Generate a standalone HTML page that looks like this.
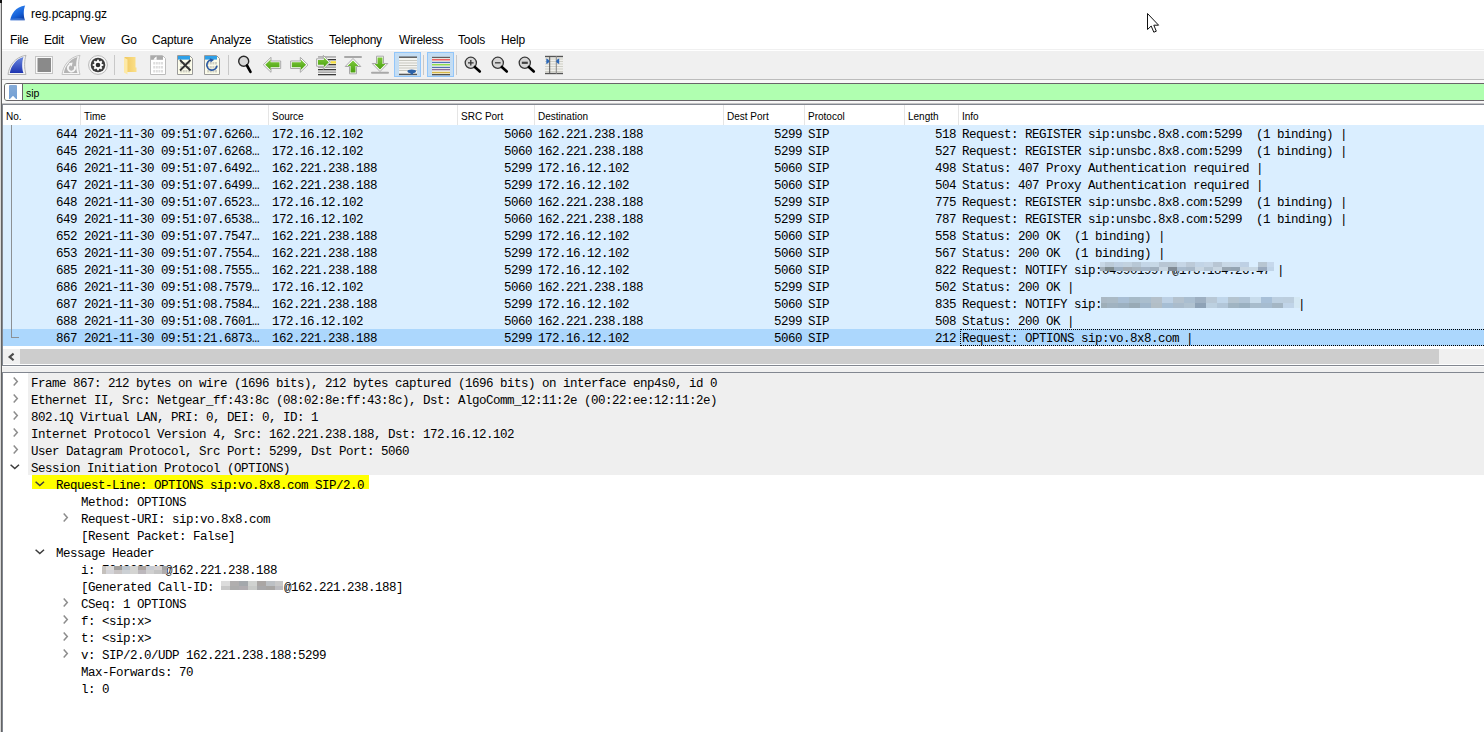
<!DOCTYPE html>
<html><head><meta charset="utf-8">
<style>
*{margin:0;padding:0;box-sizing:border-box}
html,body{width:1484px;height:732px;overflow:hidden;background:#fff}
body{position:relative;font-family:"Liberation Sans",sans-serif;color:#000}
.a{position:absolute}
svg{position:absolute;overflow:visible}
.ui{font-family:"Liberation Sans",sans-serif;white-space:pre}
.mono{font-family:"Liberation Mono",monospace;font-size:12.5px;letter-spacing:-0.5px;white-space:pre;line-height:17px;color:#000}
.menu{top:33px;font-size:12px;letter-spacing:-0.2px;line-height:14px}
.hdr{top:111px;font-size:10px;line-height:12px}
.hsep{top:105px;width:1px;height:20px;background:#e5e5e5}
.row{left:3px;width:1481px;height:17px;background:#daeeff;font-family:"Liberation Mono",monospace;font-size:12.5px;letter-spacing:-0.5px;white-space:pre;line-height:17px}
.row.sel{background:#acd7fd}
.row .c{position:absolute;top:2px;height:17px}
.row .c.r{text-align:right}
.dt{height:17px;padding-top:3px}
.blank{display:inline-block;height:9px;vertical-align:-1px}
.bi{width:64px;background:linear-gradient(90deg,#d8d8d8 0,#c4c4c4 8%,#d4d4d8 15%,#9c9c9c 25%,#b4b8c0 35%,#cfcfd4 48%,#a8a4a4 60%,#c4c4c8 72%,#b8b8b8 85%,#c8c8c8 100%)}
.bc{width:62px;background:linear-gradient(90deg,#dcdcdc 0,#d4d4d4 12%,#a8a8a8 20%,#b0b0b4 35%,#d0d0d0 50%,#a4a4a4 62%,#b8bcc0 78%,#cccccc 100%)}
.tsep{top:55px;width:1px;height:20px;background:#c8c8c8}
</style></head><body>

<!-- window left border -->
<div class="a" style="left:0;top:0;width:1px;height:732px;background:#d8d8d8"></div>
<div class="a" style="left:1px;top:0;width:1px;height:732px;background:#646464"></div>
<div class="a" style="left:0;top:0;width:2px;height:3px;background:#111"></div>

<!-- title -->
<svg style="left:10px;top:5px" width="16" height="16" viewBox="0 0 16 16">
<defs><linearGradient id="sg" x1="0.2" y1="0" x2="0.8" y2="1"><stop offset="0" stop-color="#3a8ef5"/><stop offset="0.6" stop-color="#1560d8"/><stop offset="1" stop-color="#0a38a0"/></linearGradient></defs>
<path d="M0.3 15.3 C1.2 9 5.5 2 15.2 0.6 C13.6 4 13.2 9.5 14.8 15.3 Z" fill="url(#sg)"/>
<path d="M0.3 15.3 L14.8 15.3 L14.6 13.8 C10 13 5 13.2 0.9 13.8 Z" fill="#5a8ee0" opacity="0.6"/>
</svg>
<div class="a ui" style="left:31px;top:7px;font-size:12px;line-height:14px">reg.pcapng.gz</div>

<!-- cursor -->
<svg style="left:1147px;top:13px" width="13" height="20" viewBox="0 0 13 20">
<path d="M0.5 0.5 L0.5 16.5 L4.2 13 L6.8 19.2 L9.3 18.2 L6.8 12.2 L11.6 12.2 Z" fill="#fff" stroke="#111" stroke-width="1" stroke-linejoin="miter"/>
</svg>

<!-- menu -->
<div class="a ui menu" style="left:10px">File</div>
<div class="a ui menu" style="left:44px">Edit</div>
<div class="a ui menu" style="left:80px">View</div>
<div class="a ui menu" style="left:121px">Go</div>
<div class="a ui menu" style="left:152px">Capture</div>
<div class="a ui menu" style="left:210px">Analyze</div>
<div class="a ui menu" style="left:267px">Statistics</div>
<div class="a ui menu" style="left:329px">Telephony</div>
<div class="a ui menu" style="left:399px">Wireless</div>
<div class="a ui menu" style="left:458px">Tools</div>
<div class="a ui menu" style="left:501px">Help</div>

<!-- toolbar -->
<div class="a" style="left:2px;top:49px;width:1482px;height:1px;background:#f0f0f0"></div>
<div class="a" style="left:2px;top:51px;width:1482px;height:28px;background:#f0f0f0"></div>
<div class="a" style="left:2px;top:79px;width:1482px;height:1px;background:#bcbcbc"></div>
<svg style="left:0;top:0" width="600" height="90" viewBox="0 0 600 90">
<defs>
<linearGradient id="gb" x1="0" y1="0" x2="0" y2="1"><stop offset="0" stop-color="#6a88e0"/><stop offset="1" stop-color="#1e34b0"/></linearGradient>
<linearGradient id="gg" x1="0" y1="0" x2="0" y2="1"><stop offset="0" stop-color="#7cc83a"/><stop offset="1" stop-color="#4aa010"/></linearGradient>
<linearGradient id="gf" x1="0" y1="0" x2="1" y2="0"><stop offset="0" stop-color="#f0c860"/><stop offset="1" stop-color="#fbe08a"/></linearGradient>
</defs>
<!-- 1 start capture shark -->
<path d="M8 74.5 C9 66 15 57 26 55.3 C24.3 60 24 68 26 74.5 Z" fill="#f4f4f4" stroke="#b4b4b4" stroke-width="1"/>
<path d="M9.8 73 C11 66 16 59 23.5 57 C22 61 21.6 68 23.4 73 Z" fill="url(#gb)"/>
<!-- 2 stop -->
<rect x="35.5" y="56.5" width="17" height="17" fill="#fafafa" stroke="#c4c4c4" stroke-width="1"/>
<rect x="37.5" y="58" width="13.5" height="14" fill="#8a8a8a"/>
<!-- 3 restart shark -->
<path d="M62 74.5 C63 66 69 57 80 55.3 C78.3 60 78 68 80 74.5 Z" fill="#f6f6f6" stroke="#c4c4c4" stroke-width="1"/>
<path d="M63.8 73 C65 66 70 59 77.5 57 C76 61 75.6 68 77.4 73 Z" fill="#b4b4b4"/>
<path d="M70.2 64.6 A3.6 3.6 0 1 0 74.6 66.2" fill="none" stroke="#f6f6f6" stroke-width="1.9"/>
<path d="M68.6 63.2 L72.6 62.4 L71.6 66.6 Z" fill="#f6f6f6"/>
<!-- 4 options gear -->
<circle cx="98" cy="65" r="9.4" fill="#f8f8f8" stroke="#b8b8b8" stroke-width="1"/>
<circle cx="98" cy="65" r="7.3" fill="#3c3c3c"/>
<g fill="#fff" transform="translate(98 65)">
<circle r="3.9"/>
<rect x="-0.9" y="-5.3" width="1.8" height="10.6"/>
<rect x="-0.9" y="-5.3" width="1.8" height="10.6" transform="rotate(45)"/>
<rect x="-0.9" y="-5.3" width="1.8" height="10.6" transform="rotate(90)"/>
<rect x="-0.9" y="-5.3" width="1.8" height="10.6" transform="rotate(135)"/>
</g>
<circle cx="98" cy="65" r="2.3" fill="#2e2e2e"/>
<!-- sep -->
<rect x="114" y="55" width="1" height="20" fill="#c8c8c8"/>
<!-- 5 open folder -->
<path d="M124.5 57 L135.5 57 L135.5 67.5 L136.5 67.5 L136.5 72 L124.5 72 Z" fill="url(#gf)"/>
<path d="M124 57.5 L127.5 59.5 L127.5 74.5 L124 72.5 Z" fill="#fde9a6"/>
<!-- 6 save (gray doc) -->
<path d="M150.5 55.5 L162.5 55.5 L165.5 58.5 L165.5 74.5 L150.5 74.5 Z" fill="#fff" stroke="#bcbcbc" stroke-width="1"/>
<rect x="151" y="56" width="12" height="3.8" fill="#ababab"/><path d="M153.5 59.8 C154.5 58 155.5 57 156.8 56.6 C156.4 57.6 156.4 58.8 156.8 59.8 Z" fill="#fff"/>
<g fill="#dedede"><rect x="153.2" y="62" width="2" height="2.5"/><rect x="155.8" y="62" width="2" height="2.5"/><rect x="158.4" y="62" width="2" height="2.5"/><rect x="161.0" y="62" width="2" height="2.5"/><rect x="153.2" y="66" width="2" height="2.5"/><rect x="155.8" y="66" width="2" height="2.5"/><rect x="158.4" y="66" width="2" height="2.5"/><rect x="161.0" y="66" width="2" height="2.5"/><rect x="153.2" y="70" width="2" height="2.5"/><rect x="155.8" y="70" width="2" height="2.5"/><rect x="158.4" y="70" width="2" height="2.5"/><rect x="161.0" y="70" width="2" height="2.5"/></g>
<!-- 7 close doc -->
<path d="M177.5 55.5 L189.5 55.5 L192.5 58.5 L192.5 74.5 L177.5 74.5 Z" fill="#fcfcea" stroke="#9a9a9a" stroke-width="1"/>
<rect x="178" y="56" width="12" height="3.6" fill="#2ea0e8"/>
<g fill="#cfcfc4"><rect x="180.2" y="62" width="2" height="2.5"/><rect x="182.8" y="62" width="2" height="2.5"/><rect x="185.4" y="62" width="2" height="2.5"/><rect x="188.0" y="62" width="2" height="2.5"/><rect x="180.2" y="66" width="2" height="2.5"/><rect x="182.8" y="66" width="2" height="2.5"/><rect x="185.4" y="66" width="2" height="2.5"/><rect x="188.0" y="66" width="2" height="2.5"/><rect x="180.2" y="70" width="2" height="2.5"/><rect x="182.8" y="70" width="2" height="2.5"/><rect x="185.4" y="70" width="2" height="2.5"/><rect x="188.0" y="70" width="2" height="2.5"/></g>
<path d="M180 60 L190.5 70.5 M190.5 60 L180 70.5" stroke="#303030" stroke-width="1.8"/>
<!-- 8 reload doc -->
<path d="M204.5 55.5 L216.5 55.5 L219.5 58.5 L219.5 74.5 L204.5 74.5 Z" fill="#fcfcea" stroke="#9a9a9a" stroke-width="1"/>
<rect x="205" y="56" width="12" height="3.6" fill="#2ea0e8"/>
<g fill="#cfcfc4"><rect x="207.2" y="62" width="2" height="2.5"/><rect x="209.8" y="62" width="2" height="2.5"/><rect x="212.4" y="62" width="2" height="2.5"/><rect x="215.0" y="62" width="2" height="2.5"/><rect x="207.2" y="66" width="2" height="2.5"/><rect x="209.8" y="66" width="2" height="2.5"/><rect x="212.4" y="66" width="2" height="2.5"/><rect x="215.0" y="66" width="2" height="2.5"/><rect x="207.2" y="70" width="2" height="2.5"/><rect x="209.8" y="70" width="2" height="2.5"/><rect x="212.4" y="70" width="2" height="2.5"/><rect x="215.0" y="70" width="2" height="2.5"/></g>
<path d="M211.2 59.9 A5.1 5.1 0 1 0 217 65.6" fill="none" stroke="#2a58a2" stroke-width="1.7"/>
<path d="M209.8 58.2 L214.2 59.8 L210.6 62.4 Z" fill="#2a58a2"/>
<!-- sep -->
<rect x="228" y="55" width="1" height="20" fill="#c8c8c8"/>
<!-- 9 find -->
<circle cx="243.7" cy="61.3" r="5" fill="#d8d8d8" stroke="#2a2a2a" stroke-width="1.4"/>
<path d="M247 65.5 L250.5 71.8" stroke="#000" stroke-width="2.6" stroke-linecap="round"/>
<!-- 10 back -->
<path d="M263.3 64.8 L271 57.3 L271 61 L280.7 61 L280.7 68.5 L271 68.5 L271 72.3 Z" fill="#fff" stroke="#a8a8a8" stroke-width="1" stroke-linejoin="round"/>
<path d="M265.2 64.8 L270.6 59.5 L270.6 62.3 L279.5 62.3 L279.5 67.2 L270.6 67.2 L270.6 70 Z" fill="url(#gg)"/>
<!-- 11 forward -->
<path d="M308 64.8 L300.3 57.3 L300.3 61 L290.6 61 L290.6 68.5 L300.3 68.5 L300.3 72.3 Z" fill="#fff" stroke="#a8a8a8" stroke-width="1" stroke-linejoin="round"/>
<path d="M306.1 64.8 L300.7 59.5 L300.7 62.3 L291.8 62.3 L291.8 67.2 L300.7 67.2 L300.7 70 Z" fill="url(#gg)"/>
<!-- 12 go to packet -->
<g>
<rect x="318" y="56.3" width="18" height="1.3" fill="#9a9a9a"/>
<rect x="318" y="59" width="18" height="1.3" fill="#3a3a3a"/>
<rect x="330.5" y="61.2" width="5.5" height="2.3" fill="#f8e040"/>
<rect x="318" y="64" width="18" height="1.3" fill="#3a3a3a"/>
<rect x="318" y="66.5" width="18" height="1.3" fill="#9a9a9a"/>
<rect x="318" y="69" width="18" height="1.3" fill="#3a3a3a"/>
<rect x="318" y="71.5" width="18" height="1.3" fill="#9a9a9a"/>
<rect x="318" y="74" width="18" height="1.3" fill="#3a3a3a"/>
<path d="M316.6 58.8 L323.3 58.8 L323.3 55.3 L330.4 62.3 L323.3 69.3 L323.3 66.2 L316.6 66.2 Z" fill="#fff" stroke="#a0a0a0" stroke-width="0.9" stroke-linejoin="round"/>
<path d="M317.9 60 L323.8 60 L323.8 57.4 L328.9 62.3 L323.8 67.3 L323.8 64.7 L317.9 64.7 Z" fill="url(#gg)"/>
</g>
<!-- 13 first packet -->
<rect x="344" y="56" width="18" height="2" rx="1" fill="#a8a8a8"/>
<path d="M353 58.5 L360.8 66.5 L356.5 66.5 L356.5 73.8 L349.5 73.8 L349.5 66.5 L345.2 66.5 Z" fill="#fff" stroke="#a8a8a8" stroke-width="1" stroke-linejoin="round"/>
<path d="M353 60.5 L358.5 66 L355.5 66 L355.5 72.5 L350.5 72.5 L350.5 66 L347.5 66 Z" fill="url(#gg)"/>
<!-- 14 last packet -->
<rect x="371" y="71.8" width="18" height="2" rx="1" fill="#a8a8a8"/>
<path d="M380 71.5 L387.8 63.5 L383.5 63.5 L383.5 56.2 L376.5 56.2 L376.5 63.5 L372.2 63.5 Z" fill="#fff" stroke="#a8a8a8" stroke-width="1" stroke-linejoin="round"/>
<path d="M380 69.5 L385.5 64 L382.5 64 L382.5 57.5 L377.5 57.5 L377.5 64 L374.5 64 Z" fill="url(#gg)"/>
<!-- 15 auto scroll (checked) -->
<rect x="394.5" y="52.5" width="26" height="24" fill="#c4ddf3" stroke="#92c6fa" stroke-width="1"/>
<rect x="399" y="57" width="18" height="18" fill="#f4f4f0"/>
<g fill="#c8c8c0"><rect x="399" y="60" width="18" height="1"/><rect x="399" y="62.5" width="18" height="1"/><rect x="399" y="65" width="18" height="1"/><rect x="399" y="67.5" width="18" height="1"/><rect x="399" y="70" width="18" height="1"/></g>
<rect x="399" y="56.5" width="18" height="1.4" fill="#555"/>
<rect x="399" y="73.7" width="18" height="1.4" fill="#555"/>
<ellipse cx="411.7" cy="71.3" rx="4.3" ry="1.9" fill="#2c62a8"/>
<rect x="410.5" y="72" width="2.6" height="2.5" fill="#2c62a8"/>
<!-- sep -->
<rect x="423" y="55" width="1" height="20" fill="#c8c8c8"/>
<!-- 16 colorize (checked) -->
<rect x="427.5" y="52.5" width="26" height="24" fill="#c4ddf3" stroke="#92c6fa" stroke-width="1"/>
<rect x="432" y="56.8" width="18" height="18" fill="#f4f4f0"/>
<rect x="432" y="56.8" width="18" height="1.3" fill="#606060"/>
<rect x="432" y="59" width="18" height="1.5" fill="#f06060"/>
<rect x="432" y="61.8" width="18" height="1.3" fill="#5070b8"/>
<rect x="432" y="64" width="18" height="1.5" fill="#90dc50"/>
<rect x="432" y="66.8" width="18" height="1.3" fill="#5070b0"/>
<rect x="432" y="69" width="18" height="1.3" fill="#906c98"/>
<rect x="432" y="71.8" width="18" height="1.5" fill="#d8b848"/>
<rect x="432" y="74" width="18" height="1.3" fill="#505050"/>
<!-- sep -->
<rect x="456" y="55" width="1" height="20" fill="#c8c8c8"/>
<!-- 17 zoom in -->
<circle cx="470.8" cy="62.8" r="5.6" fill="#d6d6d6" stroke="#383838" stroke-width="1.3"/>
<path d="M474.8 67 L479.8 71.5" stroke="#000" stroke-width="2.6" stroke-linecap="round"/>
<path d="M468 62.8 L473.6 62.8 M470.8 60 L470.8 65.6" stroke="#333" stroke-width="1.3"/>
<!-- 18 zoom out -->
<circle cx="497.8" cy="62.8" r="5.6" fill="#d6d6d6" stroke="#383838" stroke-width="1.3"/>
<path d="M501.8 67 L506.8 71.5" stroke="#000" stroke-width="2.6" stroke-linecap="round"/>
<path d="M495 62.8 L500.6 62.8" stroke="#444" stroke-width="1.4"/>
<!-- 19 normal size -->
<circle cx="524.8" cy="62.8" r="5.6" fill="#d6d6d6" stroke="#383838" stroke-width="1.3"/>
<path d="M528.8 67 L533.8 71.5" stroke="#000" stroke-width="2.6" stroke-linecap="round"/>
<path d="M521.8 62.8 L527.8 62.8" stroke="#404040" stroke-width="2.2"/>
<!-- 20 resize columns -->
<rect x="545" y="56" width="18" height="18" fill="#f0f0ec"/>
<g fill="#d0d0c8"><rect x="545" y="58.5" width="18" height="1"/><rect x="545" y="61" width="18" height="1"/><rect x="545" y="63.5" width="18" height="1"/><rect x="545" y="66" width="18" height="1"/><rect x="545" y="68.5" width="18" height="1"/><rect x="545" y="71" width="18" height="1"/></g>
<rect x="545" y="55.8" width="18" height="1.4" fill="#555"/>
<rect x="545" y="72.8" width="18" height="1.4" fill="#555"/>
<rect x="549.2" y="56" width="1" height="18" fill="#555"/>
<rect x="555.8" y="56" width="1" height="18" fill="#888"/>
<path d="M546.3 58.4 C548 59 549.3 60 549.3 61.2 C549.3 62.4 548 63.4 546.3 64 Z" fill="#2c68b8"/>
<path d="M559.2 58.4 C557.5 59 556.2 60 556.2 61.2 C556.2 62.4 557.5 63.4 559.2 64 Z" fill="#2c68b8"/>
</svg>


<!-- filter bar -->
<div class="a" style="left:2px;top:80px;width:1482px;height:23px;background:#f8f8f8"></div>
<div class="a" style="left:2px;top:103px;width:1482px;height:1px;background:#c4c4c4"></div>
<div class="a" style="left:4px;top:83px;width:1500px;height:18px;border:1px solid #686468;border-radius:3px;background:#b0ffb0"></div>
<div class="a" style="left:5px;top:84px;width:17px;height:16px;background:#fff;border-radius:2px 0 0 2px"></div>
<div class="a" style="left:22px;top:84px;width:1px;height:16px;background:#686468"></div>
<div class="a" style="left:9px;top:85px;width:8px;height:14px;background:linear-gradient(180deg,#84aad8,#74a0d4);border-radius:1px 1px 0 0;clip-path:polygon(0 0,100% 0,100% 100%,88% 100%,50% 76%,12% 100%,0 100%)"></div>
<div class="a ui" style="left:26px;top:87px;font-size:10.5px;line-height:13px;letter-spacing:-0.1px">sip</div>

<!-- packet list frame -->
<div class="a" style="left:2px;top:104px;width:1482px;height:1px;background:#828790"></div>
<div class="a" style="left:2px;top:104px;width:1px;height:262px;background:#828790"></div>
<div class="a ui hdr" style="left:6px">No.</div>
<div class="a hsep" style="left:80px"></div>
<div class="a ui hdr" style="left:84px">Time</div>
<div class="a hsep" style="left:268px"></div>
<div class="a ui hdr" style="left:272px">Source</div>
<div class="a hsep" style="left:457px"></div>
<div class="a ui hdr" style="left:461px">SRC Port</div>
<div class="a hsep" style="left:534px"></div>
<div class="a ui hdr" style="left:538px">Destination</div>
<div class="a hsep" style="left:723px"></div>
<div class="a ui hdr" style="left:727px">Dest Port</div>
<div class="a hsep" style="left:804px"></div>
<div class="a ui hdr" style="left:808px">Protocol</div>
<div class="a hsep" style="left:904px"></div>
<div class="a ui hdr" style="left:908px">Length</div>
<div class="a hsep" style="left:958px"></div>
<div class="a ui hdr" style="left:962px">Info</div>

<div class="a row" style="top:125px"><div class="c r" style="right:1407px">644</div><div class="c" style="left:81px">2021-11-30 09:51:07.6260…</div><div class="c" style="left:269px">172.16.12.102</div><div class="c r" style="right:952px">5060</div><div class="c" style="left:535px">162.221.238.188</div><div class="c r" style="right:682px">5299</div><div class="c" style="left:805px">SIP</div><div class="c r" style="right:528px">518</div><div class="c" style="left:959px">Request: REGISTER sip:unsbc.8x8.com:5299  (1 binding) |</div></div>
<div class="a row" style="top:142px"><div class="c r" style="right:1407px">645</div><div class="c" style="left:81px">2021-11-30 09:51:07.6268…</div><div class="c" style="left:269px">172.16.12.102</div><div class="c r" style="right:952px">5060</div><div class="c" style="left:535px">162.221.238.188</div><div class="c r" style="right:682px">5299</div><div class="c" style="left:805px">SIP</div><div class="c r" style="right:528px">527</div><div class="c" style="left:959px">Request: REGISTER sip:unsbc.8x8.com:5299  (1 binding) |</div></div>
<div class="a row" style="top:159px"><div class="c r" style="right:1407px">646</div><div class="c" style="left:81px">2021-11-30 09:51:07.6492…</div><div class="c" style="left:269px">162.221.238.188</div><div class="c r" style="right:952px">5299</div><div class="c" style="left:535px">172.16.12.102</div><div class="c r" style="right:682px">5060</div><div class="c" style="left:805px">SIP</div><div class="c r" style="right:528px">498</div><div class="c" style="left:959px">Status: 407 Proxy Authentication required |</div></div>
<div class="a row" style="top:176px"><div class="c r" style="right:1407px">647</div><div class="c" style="left:81px">2021-11-30 09:51:07.6499…</div><div class="c" style="left:269px">162.221.238.188</div><div class="c r" style="right:952px">5299</div><div class="c" style="left:535px">172.16.12.102</div><div class="c r" style="right:682px">5060</div><div class="c" style="left:805px">SIP</div><div class="c r" style="right:528px">504</div><div class="c" style="left:959px">Status: 407 Proxy Authentication required |</div></div>
<div class="a row" style="top:193px"><div class="c r" style="right:1407px">648</div><div class="c" style="left:81px">2021-11-30 09:51:07.6523…</div><div class="c" style="left:269px">172.16.12.102</div><div class="c r" style="right:952px">5060</div><div class="c" style="left:535px">162.221.238.188</div><div class="c r" style="right:682px">5299</div><div class="c" style="left:805px">SIP</div><div class="c r" style="right:528px">775</div><div class="c" style="left:959px">Request: REGISTER sip:unsbc.8x8.com:5299  (1 binding) |</div></div>
<div class="a row" style="top:210px"><div class="c r" style="right:1407px">649</div><div class="c" style="left:81px">2021-11-30 09:51:07.6538…</div><div class="c" style="left:269px">172.16.12.102</div><div class="c r" style="right:952px">5060</div><div class="c" style="left:535px">162.221.238.188</div><div class="c r" style="right:682px">5299</div><div class="c" style="left:805px">SIP</div><div class="c r" style="right:528px">787</div><div class="c" style="left:959px">Request: REGISTER sip:unsbc.8x8.com:5299  (1 binding) |</div></div>
<div class="a row" style="top:227px"><div class="c r" style="right:1407px">652</div><div class="c" style="left:81px">2021-11-30 09:51:07.7547…</div><div class="c" style="left:269px">162.221.238.188</div><div class="c r" style="right:952px">5299</div><div class="c" style="left:535px">172.16.12.102</div><div class="c r" style="right:682px">5060</div><div class="c" style="left:805px">SIP</div><div class="c r" style="right:528px">558</div><div class="c" style="left:959px">Status: 200 OK  (1 binding) |</div></div>
<div class="a row" style="top:244px"><div class="c r" style="right:1407px">653</div><div class="c" style="left:81px">2021-11-30 09:51:07.7554…</div><div class="c" style="left:269px">162.221.238.188</div><div class="c r" style="right:952px">5299</div><div class="c" style="left:535px">172.16.12.102</div><div class="c r" style="right:682px">5060</div><div class="c" style="left:805px">SIP</div><div class="c r" style="right:528px">567</div><div class="c" style="left:959px">Status: 200 OK  (1 binding) |</div></div>
<div class="a row" style="top:261px"><div class="c r" style="right:1407px">685</div><div class="c" style="left:81px">2021-11-30 09:51:08.7555…</div><div class="c" style="left:269px">162.221.238.188</div><div class="c r" style="right:952px">5299</div><div class="c" style="left:535px">172.16.12.102</div><div class="c r" style="right:682px">5060</div><div class="c" style="left:805px">SIP</div><div class="c r" style="right:528px">822</div><div class="c" style="left:959px">Request: NOTIFY sip:0499019977@173.184.26.47 |</div></div>
<div class="a row" style="top:278px"><div class="c r" style="right:1407px">686</div><div class="c" style="left:81px">2021-11-30 09:51:08.7579…</div><div class="c" style="left:269px">172.16.12.102</div><div class="c r" style="right:952px">5060</div><div class="c" style="left:535px">162.221.238.188</div><div class="c r" style="right:682px">5299</div><div class="c" style="left:805px">SIP</div><div class="c r" style="right:528px">502</div><div class="c" style="left:959px">Status: 200 OK |</div></div>
<div class="a row" style="top:295px"><div class="c r" style="right:1407px">687</div><div class="c" style="left:81px">2021-11-30 09:51:08.7584…</div><div class="c" style="left:269px">162.221.238.188</div><div class="c r" style="right:952px">5299</div><div class="c" style="left:535px">172.16.12.102</div><div class="c r" style="right:682px">5060</div><div class="c" style="left:805px">SIP</div><div class="c r" style="right:528px">835</div><div class="c" style="left:959px">Request: NOTIFY sip:                            |</div></div>
<div class="a row" style="top:312px"><div class="c r" style="right:1407px">688</div><div class="c" style="left:81px">2021-11-30 09:51:08.7601…</div><div class="c" style="left:269px">172.16.12.102</div><div class="c r" style="right:952px">5060</div><div class="c" style="left:535px">162.221.238.188</div><div class="c r" style="right:682px">5299</div><div class="c" style="left:805px">SIP</div><div class="c r" style="right:528px">508</div><div class="c" style="left:959px">Status: 200 OK |</div></div>
<div class="a row sel" style="top:329px"><div class="c r" style="right:1407px">867</div><div class="c" style="left:81px">2021-11-30 09:51:21.6873…</div><div class="c" style="left:269px">162.221.238.188</div><div class="c r" style="right:952px">5299</div><div class="c" style="left:535px">172.16.12.102</div><div class="c r" style="right:682px">5060</div><div class="c" style="left:805px">SIP</div><div class="c r" style="right:528px">212</div><div class="c" style="left:959px">Request: OPTIONS sip:vo.8x8.com |</div></div>

<!-- tree lines in packet list -->
<div class="a" style="left:11px;top:125px;width:1px;height:213px;background:#8c9094"></div>
<div class="a" style="left:11px;top:337px;width:8px;height:1px;background:#8c9094"></div>

<!-- focus rect on selected info cell -->
<div class="a" style="left:960px;top:329px;width:530px;height:17px;border:1px dotted #000"></div>


<!-- horizontal scrollbar -->
<div class="a" style="left:3px;top:349px;width:1481px;height:15px;background:#f0f0f0"></div>
<div class="a" style="left:20px;top:349px;width:1419px;height:15px;background:#cdcdcd"></div>
<svg style="left:8px;top:353px" width="7" height="8" viewBox="0 0 7 8"><path d="M5.6 0.6 L1.6 3.9 L5.6 7.2" fill="none" stroke="#4a4a4a" stroke-width="2.1"/></svg>

<!-- splitter -->
<div class="a" style="left:2px;top:365px;width:1482px;height:1px;background:#828790"></div>
<div class="a" style="left:2px;top:366px;width:1482px;height:1px;background:#fafafa"></div>
<div class="a" style="left:2px;top:367px;width:1482px;height:5px;background:#f0f0f0"></div>
<div class="a" style="left:2px;top:372px;width:1482px;height:1px;background:#828790"></div>
<div class="a" style="left:2px;top:372px;width:1px;height:360px;background:#828790"></div>

<!-- details -->
<div class="a" style="left:28px;top:373px;width:1456px;height:102px;background:#efefef"></div>
<div class="a" style="left:32px;top:475px;width:337px;height:14px;background:#ffff00"></div>
<svg class="a" style="left:13px;top:377px" width="6" height="10" viewBox="0 0 6 10"><path d="M0.7 0.6 L4.3 4.6 L0.7 8.6" fill="none" stroke="#8c8c8c" stroke-width="1.5"/></svg>
<div class="a mono dt" style="left:31px;top:373px">Frame 867: 212 bytes on wire (1696 bits), 212 bytes captured (1696 bits) on interface enp4s0, id 0</div>
<svg class="a" style="left:13px;top:394px" width="6" height="10" viewBox="0 0 6 10"><path d="M0.7 0.6 L4.3 4.6 L0.7 8.6" fill="none" stroke="#8c8c8c" stroke-width="1.5"/></svg>
<div class="a mono dt" style="left:31px;top:390px">Ethernet II, Src: Netgear_ff:43:8c (08:02:8e:ff:43:8c), Dst: AlgoComm_12:11:2e (00:22:ee:12:11:2e)</div>
<svg class="a" style="left:13px;top:411px" width="6" height="10" viewBox="0 0 6 10"><path d="M0.7 0.6 L4.3 4.6 L0.7 8.6" fill="none" stroke="#8c8c8c" stroke-width="1.5"/></svg>
<div class="a mono dt" style="left:31px;top:407px">802.1Q Virtual LAN, PRI: 0, DEI: 0, ID: 1</div>
<svg class="a" style="left:13px;top:428px" width="6" height="10" viewBox="0 0 6 10"><path d="M0.7 0.6 L4.3 4.6 L0.7 8.6" fill="none" stroke="#8c8c8c" stroke-width="1.5"/></svg>
<div class="a mono dt" style="left:31px;top:424px">Internet Protocol Version 4, Src: 162.221.238.188, Dst: 172.16.12.102</div>
<svg class="a" style="left:13px;top:445px" width="6" height="10" viewBox="0 0 6 10"><path d="M0.7 0.6 L4.3 4.6 L0.7 8.6" fill="none" stroke="#8c8c8c" stroke-width="1.5"/></svg>
<div class="a mono dt" style="left:31px;top:441px">User Datagram Protocol, Src Port: 5299, Dst Port: 5060</div>
<svg class="a" style="left:10px;top:464px" width="10" height="6" viewBox="0 0 10 6"><path d="M0.6 0.7 L4.8 4.6 L9 0.7" fill="none" stroke="#3c3c3c" stroke-width="1.5"/></svg>
<div class="a mono dt" style="left:31px;top:458px">Session Initiation Protocol (OPTIONS)</div>
<svg class="a" style="left:35px;top:481px" width="10" height="6" viewBox="0 0 10 6"><path d="M0.6 0.7 L4.8 4.6 L9 0.7" fill="none" stroke="#3c3c3c" stroke-width="1.5"/></svg>
<div class="a mono dt" style="left:56px;top:475px">Request-Line: OPTIONS sip:vo.8x8.com SIP/2.0</div>
<div class="a mono dt" style="left:81px;top:492px">Method: OPTIONS</div>
<svg class="a" style="left:63px;top:513px" width="6" height="10" viewBox="0 0 6 10"><path d="M0.7 0.6 L4.3 4.6 L0.7 8.6" fill="none" stroke="#8c8c8c" stroke-width="1.5"/></svg>
<div class="a mono dt" style="left:81px;top:509px">Request-URI: sip:vo.8x8.com</div>
<div class="a mono dt" style="left:81px;top:526px">[Resent Packet: False]</div>
<svg class="a" style="left:35px;top:549px" width="10" height="6" viewBox="0 0 10 6"><path d="M0.6 0.7 L4.8 4.6 L9 0.7" fill="none" stroke="#3c3c3c" stroke-width="1.5"/></svg>
<div class="a mono dt" style="left:56px;top:543px">Message Header</div>
<div class="a mono dt" style="left:81px;top:560px">i: 704929948@162.221.238.188</div>
<div class="a mono dt" style="left:81px;top:577px">[Generated Call-ID:          @162.221.238.188]</div>
<svg class="a" style="left:63px;top:598px" width="6" height="10" viewBox="0 0 6 10"><path d="M0.7 0.6 L4.3 4.6 L0.7 8.6" fill="none" stroke="#8c8c8c" stroke-width="1.5"/></svg>
<div class="a mono dt" style="left:81px;top:594px">CSeq: 1 OPTIONS</div>
<svg class="a" style="left:63px;top:615px" width="6" height="10" viewBox="0 0 6 10"><path d="M0.7 0.6 L4.3 4.6 L0.7 8.6" fill="none" stroke="#8c8c8c" stroke-width="1.5"/></svg>
<div class="a mono dt" style="left:81px;top:611px">f: &lt;sip:x&gt;</div>
<svg class="a" style="left:63px;top:632px" width="6" height="10" viewBox="0 0 6 10"><path d="M0.7 0.6 L4.3 4.6 L0.7 8.6" fill="none" stroke="#8c8c8c" stroke-width="1.5"/></svg>
<div class="a mono dt" style="left:81px;top:628px">t: &lt;sip:x&gt;</div>
<svg class="a" style="left:63px;top:649px" width="6" height="10" viewBox="0 0 6 10"><path d="M0.7 0.6 L4.3 4.6 L0.7 8.6" fill="none" stroke="#8c8c8c" stroke-width="1.5"/></svg>
<div class="a mono dt" style="left:81px;top:645px">v: SIP/2.0/UDP 162.221.238.188:5299</div>
<div class="a mono dt" style="left:81px;top:662px">Max-Forwards: 70</div>
<div class="a mono dt" style="left:81px;top:679px">l: 0</div>
<div class="a" style="left:1100px;top:262px;width:174px;height:5px;background:linear-gradient(90deg,#c8d8e6 0px,#c8d8e6 5px,#bccbd8 5px,#bccbd8 14px,#bfd0e2 14px,#bfd0e2 23px,#c2d2e0 23px,#c2d2e0 32px,#b8c8d6 32px,#b8c8d6 41px,#c4d6e8 41px,#c4d6e8 50px,#c6d8e6 50px,#c6d8e6 59px,#b8c6d4 59px,#b8c6d4 68px,#b8c6d2 68px,#b8c6d2 77px,#c6d6e6 77px,#c6d6e6 86px,#bccad8 86px,#bccad8 95px,#c2d4e6 95px,#c2d4e6 104px,#c6d6e6 104px,#c6d6e6 113px,#b8c6d4 113px,#b8c6d4 122px,#c8d8e6 122px,#c8d8e6 131px,#c8d8e8 131px,#c8d8e8 140px,#bed0e4 140px,#bed0e4 149px,#daeeff 149px,#daeeff 158px,#b8c6d2 158px,#b8c6d2 167px,#c6d8ec 167px,#c6d8ec 174px)"></div>
<div class="a" style="left:1100px;top:267px;width:174px;height:4px;background:linear-gradient(90deg,#a4b0ba 0px,#a4b0ba 5px,#808c90 5px,#808c90 14px,#9eb0c2 14px,#9eb0c2 23px,#a4acb4 23px,#a4acb4 32px,#a8b4be 32px,#a8b4be 41px,#a6b6c8 41px,#a6b6c8 50px,#a0b0be 50px,#a0b0be 59px,#c8d6e2 59px,#c8d6e2 68px,#808a94 68px,#808a94 77px,#aabcce 77px,#aabcce 86px,#a8b8c8 86px,#a8b8c8 95px,#c8d6e2 95px,#c8d6e2 104px,#b4c4d2 104px,#b4c4d2 113px,#c8d6e2 113px,#c8d6e2 122px,#98a6b2 122px,#98a6b2 131px,#94a4b2 131px,#94a4b2 140px,#c8d6e2 140px,#c8d6e2 149px,#c8d8e4 149px,#c8d8e4 158px,#9aaabe 158px,#9aaabe 167px,#c0d4e8 167px,#c0d4e8 174px)"></div>
<div class="a" style="left:1101px;top:297px;width:199px;height:6px;background:linear-gradient(90deg,#aab8c4 0px,#aab8c4 6px,#aabac6 6px,#aabac6 17px,#a8bed4 17px,#a8bed4 28px,#a6bac8 28px,#a6bac8 39px,#aabece 39px,#aabece 50px,#b4c0ca 50px,#b4c0ca 61px,#bcd0e4 61px,#bcd0e4 72px,#b4c2ce 72px,#b4c2ce 83px,#aabed0 83px,#aabed0 94px,#9eb0c2 94px,#9eb0c2 105px,#b8c8d6 105px,#b8c8d6 116px,#c0d6ea 116px,#c0d6ea 127px,#b4c4d0 127px,#b4c4d0 138px,#b0c4d6 138px,#b0c4d6 149px,#c8dcec 149px,#c8dcec 160px,#a8c0d8 160px,#a8c0d8 171px,#bccfe0 171px,#bccfe0 182px,#bcceDE 182px,#bcceDE 193px,#d4e8f4 193px,#d4e8f4 199px)"></div>
<div class="a" style="left:1101px;top:303px;width:199px;height:5px;background:linear-gradient(90deg,#9eaeb8 0px,#9eaeb8 6px,#a0b2c0 6px,#a0b2c0 17px,#9cb0c0 17px,#9cb0c0 28px,#98aab6 28px,#98aab6 39px,#a0b6ca 39px,#a0b6ca 50px,#b2bec6 50px,#b2bec6 61px,#a6bed4 61px,#a6bed4 72px,#aabccc 72px,#aabccc 83px,#b0c2d0 83px,#b0c2d0 94px,#8ea2b6 94px,#8ea2b6 105px,#bcd0e0 105px,#bcd0e0 116px,#b2c6d8 116px,#b2c6d8 127px,#a0b4c2 127px,#a0b4c2 138px,#9ab0c0 138px,#9ab0c0 149px,#a8bccc 149px,#a8bccc 160px,#a6bcd0 160px,#a6bcd0 171px,#a4b6c4 171px,#a4b6c4 182px,#c0d4e8 182px,#c0d4e8 193px,#d4e8f4 193px,#d4e8f4 199px)"></div>
<div class="a" style="left:102px;top:566px;width:65px;height:4px;background:linear-gradient(90deg,#c8c4c0 0px,#c8c4c0 4px,#dcdad8 4px,#dcdad8 12px,#a09e9c 12px,#a09e9c 20px,#bcc4cc 20px,#bcc4cc 28px,#d4d4d2 28px,#d4d4d2 36px,#aca4a0 36px,#aca4a0 44px,#c8ccd4 44px,#c8ccd4 52px,#d4d0d0 52px,#d4d0d0 60px,#a4a4a4 60px,#a4a4a4 65px)"></div>
<div class="a" style="left:102px;top:570px;width:65px;height:4px;background:linear-gradient(90deg,#c4c0bc 0px,#c4c0bc 4px,#d4d4d8 4px,#d4d4d8 12px,#c8c4c4 12px,#c8c4c4 20px,#ccd0d4 20px,#ccd0d4 28px,#d4d4d2 28px,#d4d4d2 36px,#bcb8bc 36px,#bcb8bc 44px,#d0d0d0 44px,#d0d0d0 52px,#c4c4c4 52px,#c4c4c4 60px,#b0acac 60px,#b0acac 65px)"></div>
<div class="a" style="left:221px;top:581px;width:62px;height:5px;background:linear-gradient(90deg,#dcdcdc 0px,#dcdcdc 9px,#b0aeae 9px,#b0aeae 18px,#a4a8ac 18px,#a4a8ac 27px,#d0d2d0 27px,#d0d2d0 36px,#aaa6a4 36px,#aaa6a4 45px,#bcc0c4 45px,#bcc0c4 54px,#c8c8c8 54px,#c8c8c8 62px)"></div>
<div class="a" style="left:221px;top:586px;width:62px;height:4px;background:linear-gradient(90deg,#c8c8c8 0px,#c8c8c8 9px,#acacac 9px,#acacac 18px,#b0acb0 18px,#b0acb0 27px,#c8cac8 27px,#c8cac8 36px,#a8a8aa 36px,#a8a8aa 45px,#a8a6a4 45px,#a8a6a4 54px,#bcbcc0 54px,#bcbcc0 62px)"></div>


</body></html>
